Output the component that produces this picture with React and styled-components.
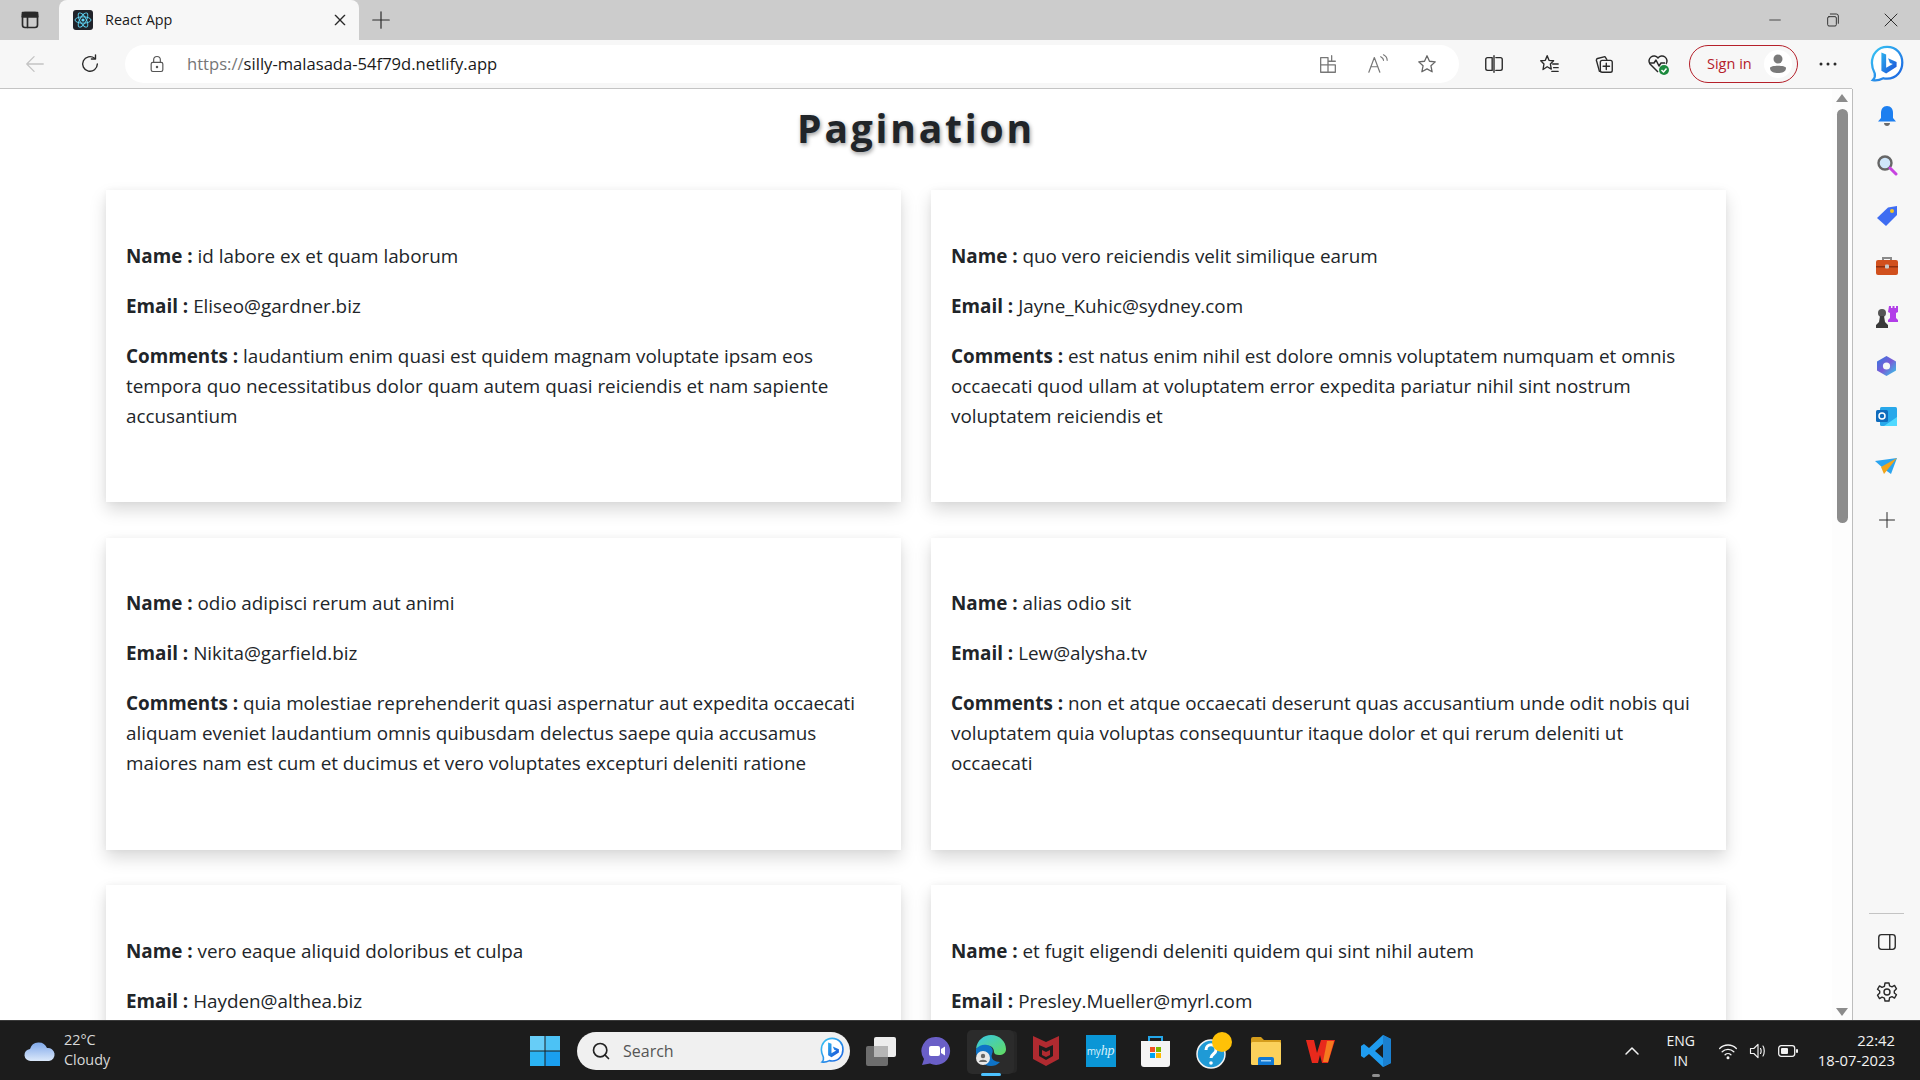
import React from 'react';
import styled, { createGlobalStyle } from 'styled-components';
import { Search as SearchGlyph } from 'lucide-react';

const GlobalStyle = createGlobalStyle`
  html, body {
    margin: 0;
    height: 100%;
    overflow: hidden;
    background: #fff;
    font-family: "Open Sans", "Liberation Sans", sans-serif;
  }
  * { box-sizing: border-box; }
`;

const Screen = styled.div`
  width: 1920px;
  height: 1080px;
  display: flex;
  flex-direction: column;
  overflow: hidden;
`;

/* browser chrome */
const TabStrip = styled.div`
  height: 40px;
  flex: none;
  background: #cccccc;
  display: flex;
  align-items: stretch;
`;

const TabToggle = styled.div`
  width: 59px;
  display: flex;
  align-items: center;
  justify-content: center;
`;

const Tab = styled.div`
  width: 300px;
  background: #f7f7f7;
  border-radius: 8px 8px 0 0;
  display: flex;
  align-items: center;
  padding: 0 11px 0 14px;
  gap: 12px;
`;

const TabTitle = styled.span`
  flex: 1;
  padding-bottom: 2px;
  font-size: 14.4px;
  color: #1a1a1a;
`;

const NewTab = styled.div`
  width: 44px;
  display: flex;
  align-items: center;
  justify-content: center;
`;

const WindowControls = styled.div`
  margin-left: auto;
  display: flex;
  align-items: center;
`;

const WindowButton = styled.div`
  width: 58px;
  display: flex;
  justify-content: center;
`;

const Toolbar = styled.div`
  height: 49px;
  flex: none;
  background: #f7f7f7;
  display: flex;
  align-items: center;
  padding-bottom: 1px;
  position: relative;
`;

const ToolbarRule = styled.div`
  height: 1px;
  background: #c4c4c4;
  position: absolute;
  left: 0;
  right: 68px;
  bottom: 0;
`;

const ToolSlot = styled.div`
  width: ${p => p.$w || 55}px;
  flex: none;
  display: flex;
  align-items: center;
  justify-content: center;
`;

const AddressBar = styled.div`
  width: 1334px;
  height: 38px;
  flex: none;
  border-radius: 19px;
  background: #fff;
  display: flex;
  align-items: center;
  padding: 0 8px 0 22px;
`;

const Url = styled.div`
  flex: 1;
  margin-left: 20px;
  padding-bottom: 2px;
  font-size: 16.6px;
  color: #1a1a1a;
  span { color: #767676; }
`;

const SignIn = styled.div`
  width: 109px;
  height: 38px;
  flex: none;
  border: 1.5px solid #b5202a;
  border-radius: 19px;
  display: flex;
  align-items: center;
  justify-content: space-between;
  padding: 0 5px 0 17px;
  font-size: 14.5px;
  color: #b5202a;
`;

const SignInLabel = styled.span`
  padding-bottom: 2px;
`;

const Avatar = styled.div`
  width: 28px;
  height: 28px;
  border-radius: 50%;
  background: #fff;
  display: flex;
  align-items: center;
  justify-content: center;
`;

/* page + side rails */
const Body = styled.div`
  flex: 1;
  min-height: 0;
  display: flex;
`;

const Page = styled.main`
  width: 1832px;
  flex: none;
  overflow: hidden;
  background: #fff;
  color: #212529;
`;

const Title = styled.h1`
  margin: 0;
  height: 101px;
  padding-top: 11px;
  text-align: center;
  font-size: 39px;
  line-height: 56px;
  font-weight: 700;
  letter-spacing: 2.8px;
  color: #212529;
  text-shadow: 1px 2px 4px rgba(0, 0, 0, 0.4);
`;

const Grid = styled.div`
  margin: 0 106px;
  display: grid;
  grid-template-columns: repeat(2, 795px);
  column-gap: 30px;
  row-gap: 35.5px;
`;

const Card = styled.article`
  height: 312px;
  padding: 30.5px 20px 0;
  background: #fff;
  box-shadow: 0 8px 16px rgba(0, 0, 0, 0.15), 0 0 6px rgba(0, 0, 0, 0.04);
`;

const Field = styled.p`
  margin: 20px 0;
  font-size: 18.85px;
  line-height: 30px;
  b { font-weight: 700; }
`;

const Scrollbar = styled.div`
  width: 20px;
  flex: none;
  background: #fdfdfd;
  display: flex;
  flex-direction: column;
  align-items: center;
  padding-top: 5px;
`;

const Thumb = styled.div`
  width: 11px;
  height: 414px;
  margin-top: 7px;
  border-radius: 6px;
  background: #8c8c8c;
`;

const Arrow = styled.div`
  width: 0;
  height: 0;
  border-left: 6px solid transparent;
  border-right: 6px solid transparent;
  ${p => (p.$down
    ? 'border-top: 8px solid #8c8c8c; margin-top: auto; margin-bottom: 4px;'
    : 'border-bottom: 8px solid #8c8c8c;')}
`;

const SideBar = styled.aside`
  flex: 1;
  background: #f7f7f7;
  border-left: 1px solid #bdbdbd;
  display: flex;
  flex-direction: column;
  align-items: center;
  padding: 2px 0 3px;
`;

const SideSlot = styled.div`
  height: 50px;
  flex: none;
  display: flex;
  align-items: center;
  justify-content: center;
  margin-top: ${p => p.$gap || 0}px;
`;

const SideRule = styled.div`
  width: 35px;
  height: 1px;
  margin-top: auto;
  margin-bottom: 3px;
  background: #c4c4c4;
`;

/* windows taskbar */
const Taskbar = styled.footer`
  height: 60px;
  flex: none;
  background: #1c1c1c;
  border-top: 1px solid #3a3a3a;
  display: flex;
  align-items: center;
  color: #f2f2f2;
  position: relative;
`;

const Weather = styled.div`
  width: 530px;
  flex: none;
  display: flex;
  align-items: center;
  gap: 8px;
  padding-left: 24px;
`;

const TwoLines = styled.div`
  padding-bottom: 2px;
  font-size: 14.4px;
  line-height: 20px;
  text-align: ${p => p.$align || 'left'};
  span { display: block; color: ${p => p.$muted || '#f2f2f2'}; }
`;

const StartButton = styled.div`
  width: 47px;
  flex: none;
  display: flex;
`;

const SearchBox = styled.div`
  width: 273px;
  height: 38px;
  flex: none;
  background: #f0f0f0;
  border-radius: 19px;
  display: flex;
  align-items: center;
  padding: 0 6px 0 14px;
  gap: 12px;
  font-size: 16px;
  color: #555;
`;

const SearchLabel = styled.span`
  flex: 1;
`;

const AppTray = styled.div`
  margin-left: 3px;
  display: flex;
  align-items: center;
`;

const AppSlot = styled.div`
  width: 55px;
  height: 52px;
  flex: none;
  display: flex;
  align-items: center;
  justify-content: center;
  position: relative;
`;

const AppIcon = styled.div`
  position: relative;
  display: flex;
`;

const ActiveBox = styled.div`
  position: absolute;
  inset: 5px 4px 3px 4px;
  background: #2b2b2b;
  border-radius: 5px;
  box-shadow: 4px 0 0 -1px #262626;
`;

const Indicator = styled.div`
  position: absolute;
  left: 50%;
  bottom: ${p => (p.$small ? 0 : 1)}px;
  width: ${p => (p.$small ? 8 : 20)}px;
  height: 3px;
  margin-left: ${p => (p.$small ? -4 : -10)}px;
  border-radius: 2px;
  background: ${p => (p.$small ? '#8e8e8e' : '#4cc2ff')};
`;

const HpTile = styled.div`
  width: 30px;
  height: 32px;
  background: #0a96d6;
  color: #d8f1fb;
  display: flex;
  align-items: center;
  justify-content: center;
  font-size: 10px;
  letter-spacing: -0.2px;
  em { font-size: 14px; font-family: "Liberation Serif", serif; }
`;

const SystemTray = styled.div`
  margin-left: auto;
  padding-right: 25px;
  display: flex;
  align-items: center;
`;

const Chevron = styled.div`
  margin-right: 20px;
  display: flex;
`;

const Lang = styled(TwoLines)`
  width: 40px;
  margin-right: 17px;
  padding-bottom: 0;
  font-size: 14px;
  text-align: center;
`;

const TrayIcons = styled.div`
  display: flex;
  align-items: center;
  gap: 10px;
  margin-right: 20px;
`;

const Clock = styled(TwoLines)`
  font-size: 14.8px;
  text-align: right;
`;

const Glyph = ({ size = 22, children, view = 24, color = '#2a2a2a', sw = 1.5 }) => (
  <svg width={size} height={size} viewBox={`0 0 ${view} ${view}`} fill="none" stroke={color} strokeWidth={sw} strokeLinecap="round" strokeLinejoin="round">
    {children}
  </svg>
);

const BingLogo = ({ size = 38 }) => (
  <svg width={size * 0.9} height={size} viewBox="0 0 36 40">
    <defs>
      <linearGradient id="bingRing" x1="0" y1="0" x2="1" y2="1">
        <stop offset="0" stopColor="#38c7f4" />
        <stop offset="1" stopColor="#1b5fe0" />
      </linearGradient>
      <linearGradient id="bingB" x1="0" y1="0" x2="1" y2="1">
        <stop offset="0" stopColor="#2bb0ee" />
        <stop offset="1" stopColor="#1d4fd8" />
      </linearGradient>
    </defs>
    <path d="M18 2C8 2 2 10 2 19c0 5 2 9 3 11 .5 2 0 5-2 7 5 1 9-1 11-2 1.500.5 3 .5 4 .5 10 0 16-8 16-17S28 2 18 2z" fill="#fff" stroke="url(#bingRing)" strokeWidth="2.4" />
    <path d="M12 8l5 2v14l7-4-3-1-2-5 9 4v5l-11 7-5-3z" fill="url(#bingB)" />
  </svg>
);

const ReactFavicon = () => (
  <svg width="20" height="20" viewBox="0 0 20 20">
    <rect width="20" height="20" rx="3" fill="#20232a" />
    <g fill="none" stroke="#61dafb" strokeWidth="0.9">
      <ellipse cx="10" cy="10" rx="8" ry="3.2" />
      <ellipse cx="10" cy="10" rx="8" ry="3.2" transform="rotate(60 10 10)" />
      <ellipse cx="10" cy="10" rx="8" ry="3.2" transform="rotate(120 10 10)" />
    </g>
    <circle cx="10" cy="10" r="1.6" fill="#61dafb" />
  </svg>
);

const sideIcons = [
  <svg key="bell" width="20" height="22" viewBox="0 0 20 22">
    <path d="M10 1c-4 0-6 3-6 7v5l-3 3.500h18L16 13V8c0-4-2-7-6-7z" fill="#1d7ff0" />
    <path d="M7 18h6c0 2-1.500 3-3 3s-3-1-3-3z" fill="#6b6b6b" />
  </svg>,
  <svg key="search" width="22" height="22" viewBox="0 1 22 22">
    <circle cx="9" cy="9" r="6.500" fill="#cfe6fa" stroke="#666" strokeWidth="2.4" />
    <path d="M14 14l6 6" stroke="#c743e0" strokeWidth="3" strokeLinecap="round" />
  </svg>,
  <svg key="tag" width="22" height="22" viewBox="0 0 22 22">
    <path d="M1 13L12 2.500 21 1v9L10 21z" fill="#3f6df2" />
    <circle cx="16" cy="6" r="2" fill="#f6c51f" />
  </svg>,
  <svg key="tool" width="24" height="20" viewBox="0 0 24 20">
    <path d="M8 5V2h8v3" fill="none" stroke="#8a8a8a" strokeWidth="2" />
    <rect x="1" y="4" width="22" height="15" rx="2" fill="#d1501d" />
    <rect x="1" y="10" width="22" height="1.500" fill="#8f3010" />
    <rect x="10" y="8.500" width="4" height="4" rx="1" fill="#c8c8c8" />
  </svg>,
  <svg key="chess" width="24" height="23" viewBox="0 0 24 23">
    <path d="M14 1h2v2h1.500V1h2v2H21V1h2v6l-2 1v5l2 2v2H13v-2l2-2V8l-2-1z" fill="#b23ee8" />
    <circle cx="7" cy="8" r="4" fill="#555" />
    <path d="M5 11h4l1 6 3 3v3H1v-3l3-3z" fill="#3a3a3a" />
  </svg>,
  <svg key="m365" width="21" height="22" viewBox="0 0 21 22">
    <defs>
      <linearGradient id="m365g" x1="0" y1="0" x2="1" y2="1">
        <stop offset="0" stopColor="#2f7be0" />
        <stop offset="0.5" stopColor="#7b5bd6" />
        <stop offset="1" stopColor="#2fd0ea" />
      </linearGradient>
    </defs>
    <path d="M10.500 1L20 6.500v9L10.500 21 1 15.500v-9z" fill="url(#m365g)" />
    <circle cx="10.500" cy="11" r="3.600" fill="#f7f7f7" />
  </svg>,
  <svg key="outlook" width="22" height="21" viewBox="0 0 22 21">
    <rect x="4" y="1" width="17" height="19" rx="1.500" fill="#28a8ea" />
    <path d="M8 20l13-9v8a1 1 0 01-1 1z" fill="#50d9ff" />
    <rect x="0" y="4" width="12" height="12" rx="1.500" fill="#0f6cbd" />
    <circle cx="6" cy="10" r="3" fill="none" stroke="#fff" strokeWidth="1.500" />
  </svg>,
  <svg key="send" width="23" height="17" viewBox="0 0 23 17">
    <path d="M0 3l22-3-6 16-7-5z" fill="#2aa4ef" />
    <path d="M22 0L6 9l3 7z" fill="#f2a51a" />
  </svg>,
];

const taskApps = [
  <svg key="view" width="30" height="30" viewBox="0 0 30 30">
    <rect x="0" y="10" width="22" height="20" rx="2" fill="#6d6d6d" />
    <rect x="8" y="1" width="22" height="20" rx="2" fill="#ededed" />
    <rect x="8" y="10" width="14" height="11" fill="#b5b5b5" />
  </svg>,
  <svg key="meet" width="30" height="30" viewBox="0 0 30 30">
    <path d="M15 1a14 14 0 11-6 26.600L1 29l2-6A14 14 0 0115 1z" fill="#6a5fc7" />
    <rect x="8" y="10" width="11" height="10" rx="2" fill="#fff" />
    <path d="M20 13l4-2.500v9L20 17z" fill="#fff" />
  </svg>,
  <svg key="edge" width="32" height="34" viewBox="0 0 32 34">
    <defs>
      <linearGradient id="edgeA" x1="0" y1="0" x2="1" y2="1">
        <stop offset="0" stopColor="#36c6e8" />
        <stop offset="1" stopColor="#63dc5f" />
      </linearGradient>
    </defs>
    <path d="M1 15C2 6 9 1 16 1c9 0 15 7 15 14 0 4-3 6-7 6-3 0-5-1-5-3 0-4-3-7-8-6-5 0-9 2-10 3z" fill="url(#edgeA)" />
    <path d="M1 15c3-4 8-5 11-4 5 1 7 5 5 9-2 5 3 8 8 8-3 3-6 4-9 4C8 32 0 25 1 15z" fill="#0e73c7" />
    <circle cx="8" cy="24" r="7" fill="#e8e8e8" />
    <circle cx="8" cy="22" r="2.200" fill="#666" />
    <path d="M4 28c0-3 8-3 8 0z" fill="#666" />
  </svg>,
  <svg key="mcafee" width="28" height="32" viewBox="0 0 28 32">
    <path d="M1 1l13 6 13-6v23l-13 7-13-7z" fill="#b02a30" />
    <path d="M7 10l7 3 7-3v11l-7 4-7-4z" fill="#1c1c1c" />
    <path d="M10 15l4 2 4-2v5l-4 2-4-2z" fill="#b02a30" />
  </svg>,
  <HpTile key="hp">my<em>hp</em></HpTile>,
  <svg key="store" width="29" height="32" viewBox="0 0 29 32">
    <path d="M8 7V2h13v5" fill="none" stroke="#23a6e8" strokeWidth="2" />
    <path d="M0 6h29v23a3 3 0 01-3 3H3a3 3 0 01-3-3z" fill="#f4f4f4" />
    <rect x="9" y="12" width="5" height="5" fill="#f25022" />
    <rect x="15" y="12" width="5" height="5" fill="#7fba00" />
    <rect x="9" y="18" width="5" height="5" fill="#00a4ef" />
    <rect x="15" y="18" width="5" height="5" fill="#ffb900" />
  </svg>,
  <svg key="help" width="44" height="38" viewBox="-7 0 44 38">
    <circle cx="15" cy="22" r="14" fill="#1f9ad6" stroke="#f2f2f2" strokeWidth="1.500" />
    <path d="M10 18c0-7 10-7 10 0 0 4-5 4-5 8" fill="none" stroke="#fff" strokeWidth="3" />
    <circle cx="15" cy="31" r="1.800" fill="#fff" />
    <circle cx="26" cy="10" r="10" fill="#ffc107" />
  </svg>,
  <svg key="files" width="30" height="28" viewBox="0 0 30 28">
    <path d="M0 2a2 2 0 012-2h8l3 3h17v6H0z" fill="#d59d1c" />
    <rect y="5" width="30" height="23" rx="1.500" fill="#fbd15b" />
    <path d="M7 28v-6a2 2 0 012-2h12a2 2 0 012 2v6z" fill="#0f78d4" />
    <rect x="10" y="23" width="10" height="1.500" fill="#9ed0f5" />
  </svg>,
  <svg key="wps" width="31" height="26" viewBox="0 0 31 26">
    <path d="M1 2h8l3 13L16 2h8l6 0-7 23h-6l-2-8-2 8H7z" fill="#e8291c" />
    <path d="M22 3l7 0-6 21h-5z" fill="#f57a1f" />
  </svg>,
  <svg key="code" width="30" height="32" viewBox="0 0 30 32">
    <path d="M22 0l8 4v24l-8 4-14-13-5 4-3-2V11l3-2 5 4zM22 9l-8 7 8 7z" fill="#1f9cf0" />
    <path d="M22 0l8 4v24l-8 4z" fill="#1b80d0" />
  </svg>,
];

const comments = [
  {
    name: 'id labore ex et quam laborum',
    email: 'Eliseo@gardner.biz',
    body: 'laudantium enim quasi est quidem magnam voluptate ipsam eos tempora quo necessitatibus dolor quam autem quasi reiciendis et nam sapiente accusantium',
  },
  {
    name: 'quo vero reiciendis velit similique earum',
    email: 'Jayne_Kuhic@sydney.com',
    body: 'est natus enim nihil est dolore omnis voluptatem numquam et omnis occaecati quod ullam at voluptatem error expedita pariatur nihil sint nostrum voluptatem reiciendis et',
  },
  {
    name: 'odio adipisci rerum aut animi',
    email: 'Nikita@garfield.biz',
    body: 'quia molestiae reprehenderit quasi aspernatur aut expedita occaecati aliquam eveniet laudantium omnis quibusdam delectus saepe quia accusamus maiores nam est cum et ducimus et vero voluptates excepturi deleniti ratione',
  },
  {
    name: 'alias odio sit',
    email: 'Lew@alysha.tv',
    body: 'non et atque occaecati deserunt quas accusantium unde odit nobis qui voluptatem quia voluptas consequuntur itaque dolor et qui rerum deleniti ut occaecati',
  },
  {
    name: 'vero eaque aliquid doloribus et culpa',
    email: 'Hayden@althea.biz',
    body: 'harum non quasi et ratione tempore iure ex voluptates in ratione harum architecto fugit inventore cupiditate voluptates magni quo et',
  },
  {
    name: 'et fugit eligendi deleniti quidem qui sint nihil autem',
    email: 'Presley.Mueller@myrl.com',
    body: 'doloribus at sed quis culpa deserunt consectetur qui praesentium accusamus fugiat dicta voluptatem rerum ut voluptate autem',
  },
];

const App = () => (
  <Screen>
    <GlobalStyle />
    <TabStrip>
      <TabToggle>
        <Glyph size={20} sw={2}>
          <rect x="3" y="3" width="18" height="18" rx="3" />
          <path d="M3 8h18M9 8v13" />
          <path d="M3 3h18v5H3z" fill="#2a2a2a" />
        </Glyph>
      </TabToggle>
      <Tab>
        <ReactFavicon />
        <TabTitle>React App</TabTitle>
        <Glyph size={16} sw={2}><path d="M5 5l14 14M19 5L5 19" /></Glyph>
      </Tab>
      <NewTab>
        <Glyph size={22} sw={1.3}><path d="M12 3v18M3 12h18" /></Glyph>
      </NewTab>
      <WindowControls>
        <WindowButton><Glyph size={16} sw={1.2}><path d="M4 12h16" /></Glyph></WindowButton>
        <WindowButton>
          <Glyph size={16} sw={1.4}>
            <rect x="4" y="7" width="13" height="14" rx="2" />
            <path d="M8 3h9a3 3 0 013 3v11" />
          </Glyph>
        </WindowButton>
        <WindowButton><Glyph size={18} sw={1.3}><path d="M4 4l16 16M20 4L4 20" /></Glyph></WindowButton>
      </WindowControls>
    </TabStrip>

    <Toolbar>
      <ToolSlot $w={70}>
        <Glyph color="#c4c4c4" sw={1.4}><path d="M21 12H3M11 4l-8 8 8 8" /></Glyph>
      </ToolSlot>
      <ToolSlot $w={40}>
        <Glyph sw={1.5}>
          <path d="M20 12a8 8 0 11-3-6.300" />
          <path d="M18 2v4.500h-4.500" />
        </Glyph>
      </ToolSlot>
      <ToolSlot $w={15} />
      <AddressBar>
        <Glyph size={20} color="#555" sw={1.4}>
          <rect x="5" y="10" width="14" height="11" rx="2" />
          <path d="M8 10V7a4 4 0 018 0v3" />
          <circle cx="12" cy="15.500" r="0.800" fill="#555" />
        </Glyph>
        <Url><span>https://</span>silly-malasada-54f79d.netlify.app</Url>
        <ToolSlot $w={50}>
          <Glyph color="#777" sw={1.4}>
            <path d="M4 5h8v16H4zM4 13h16v8h-8M12 9h8M16 3v6" />
          </Glyph>
        </ToolSlot>
        <ToolSlot $w={50}>
          <Glyph color="#777" sw={1.3}>
            <path d="M2 21l6-16 6 16M4 15h8M15 4c2 1 3 2 3 4M18 2c2 1 4 3 4 6" />
          </Glyph>
        </ToolSlot>
        <ToolSlot $w={48}>
          <Glyph color="#666" sw={1.4}>
            <path d="M12 3l2.700 6 6.300.700-4.700 4.300 1.300 6.500L12 17.300 6.400 20.500l1.300-6.500L3 9.700 9.300 9z" />
          </Glyph>
        </ToolSlot>
      </AddressBar>
      <ToolSlot $w={70}>
        <Glyph>
          <path d="M10 5H5a2 2 0 00-2 2v10a2 2 0 002 2h5zM14 5h5a2 2 0 012 2v10a2 2 0 01-2 2h-5M12 3v18" />
        </Glyph>
      </ToolSlot>
      <ToolSlot $w={40}>
        <Glyph>
          <path d="M10 3l2 5 5 .500-3.500 3.500 1 5.500L10 15l-4.500 3 1-6L3 8.500 8 8zM16 12h6M17 16h5M15 20h7" />
        </Glyph>
      </ToolSlot>
      <ToolSlot $w={70}>
        <Glyph>
          <path d="M7 20l-3-11a2 2 0 011-3l8-2 2 3" />
          <rect x="8" y="8" width="13" height="13" rx="2" />
          <path d="M14.500 11v7M11 14.500h7" />
        </Glyph>
      </ToolSlot>
      <ToolSlot $w={38}>
        <svg width="24" height="24" viewBox="0 0 24 24" fill="none" stroke="#2a2a2a" strokeWidth="1.500" strokeLinejoin="round">
          <path d="M12 20L4 12a5 5 0 018-6 5 5 0 018 6" />
          <path d="M3 11h5l2-3 3 6 2-3h4" />
          <circle cx="18" cy="18" r="5" fill="#1c8a3e" stroke="none" />
          <path d="M15.500 18l2 2 3-3.500" stroke="#fff" />
        </svg>
      </ToolSlot>
      <ToolSlot $w={12} />
      <SignIn>
        <SignInLabel>Sign in</SignInLabel>
        <Avatar>
          <svg width="18" height="20" viewBox="0 0 18 20">
            <circle cx="9" cy="5" r="4.500" fill="#7a7a7a" />
            <path d="M1 14c0-3 16-3 16 0 0 4-4 5-8 5s-8-1-8-5z" fill="#7a7a7a" />
          </svg>
        </Avatar>
      </SignIn>
      <ToolSlot $w={60}>
        <svg width="18" height="4" viewBox="0 0 18 4" fill="#2a2a2a">
          <circle cx="2" cy="2" r="1.500" /><circle cx="9" cy="2" r="1.500" /><circle cx="16" cy="2" r="1.500" />
        </svg>
      </ToolSlot>
      <ToolSlot $w={58}>
        <BingLogo />
      </ToolSlot>
      <ToolbarRule />
    </Toolbar>

    <Body>
      <Page>
        <Title>Pagination</Title>
        <Grid>
          {comments.map(item => (
            <Card key={item.email}>
              <Field><b>Name :</b> {item.name}</Field>
              <Field><b>Email :</b> {item.email}</Field>
              <Field><b>Comments :</b> {item.body}</Field>
            </Card>
          ))}
        </Grid>
      </Page>
      <Scrollbar>
        <Arrow />
        <Thumb />
        <Arrow $down />
      </Scrollbar>
      <SideBar>
        {sideIcons.map(icon => <SideSlot key={icon.key}>{icon}</SideSlot>)}
        <SideSlot $gap={4}><Glyph size={20} sw={1.2}><path d="M12 3v18M3 12h18" /></Glyph></SideSlot>
        <SideRule />
        <SideSlot>
          <Glyph size={22} sw={1.5}>
            <rect x="3" y="4" width="18" height="16" rx="3" />
            <path d="M15 4v16" />
          </Glyph>
        </SideSlot>
        <SideSlot>
          <Glyph size={24} sw={1.4}>
            <circle cx="12" cy="12" r="3" />
            <path d="M10 3h4l.6 2.800 2.400 1 2.500-1.400 2 3.400L19.300 11v2l2.200 1.700-2 3.400-2.500-1.400-2.400 1L14 21h-4l-.6-2.800-2.400-1-2.500 1.400-2-3.400L4.700 13v-2L2.500 9.300l2-3.400L7 7.300l2.400-1z" />
          </Glyph>
        </SideSlot>
      </SideBar>
    </Body>

    <Taskbar>
      <Weather>
        <svg width="32" height="22" viewBox="0 0 32 22">
          <defs>
            <linearGradient id="cloudFill" x1="0" y1="0" x2="0" y2="1">
              <stop offset="0" stopColor="#7fa8ea" />
              <stop offset="1" stopColor="#dbe8fa" />
            </linearGradient>
          </defs>
          <path d="M7 21a6 6 0 01-1-12 9 9 0 0117-1 6.500 6.500 0 012 13z" fill="url(#cloudFill)" />
        </svg>
        <TwoLines $muted="#d8d8d8">
          <span>22°C</span>
          <span>Cloudy</span>
        </TwoLines>
      </Weather>
      <StartButton>
        <svg width="30" height="30" viewBox="0 0 30 30" fill="#2bb3f3">
          <rect width="14.500" height="14.500" fill="#67cdf7" />
          <rect x="15.500" width="14.500" height="14.500" fill="#4cc2f5" />
          <rect y="15.500" width="14.500" height="14.500" fill="#2bb3f3" />
          <rect x="15.500" y="15.500" width="14.500" height="14.500" fill="#1a9ff0" />
        </svg>
      </StartButton>
      <SearchBox>
        <SearchGlyph size={20} color="#222" strokeWidth={2} />
        <SearchLabel>Search</SearchLabel>
        <BingLogo size={27} />
      </SearchBox>
      <AppTray>
        {taskApps.map((icon, index) => (
          <AppSlot key={icon.key}>
            {index === 2 && <ActiveBox />}
            <AppIcon>{icon}</AppIcon>
            {index === 2 && <Indicator />}
            {index === 9 && <Indicator $small />}
          </AppSlot>
        ))}
      </AppTray>
      <SystemTray>
        <Chevron>
          <Glyph size={18} color="#f2f2f2" sw={2}><path d="M4 16l8-8 8 8" /></Glyph>
        </Chevron>
        <Lang>
          <span>ENG</span>
          <span>IN</span>
        </Lang>
        <TrayIcons>
          <Glyph size={20} color="#f2f2f2" sw={1.6}>
            <path d="M2 9a14 14 0 0120 0M5 13a10 10 0 0114 0M8.500 16.500a5 5 0 017 0" />
            <circle cx="12" cy="20" r="1" fill="#f2f2f2" />
          </Glyph>
          <Glyph size={20} color="#f2f2f2" sw={1.4}>
            <path d="M3 9v6h4l5 5V4L7 9zM15 9c1 1 1 5 0 6M18 6c2 3 2 9 0 12" />
          </Glyph>
          <svg width="20" height="12" viewBox="0 0 20 12">
            <rect x="0.700" y="0.700" width="16" height="10.600" rx="2.500" fill="none" stroke="#f2f2f2" strokeWidth="1.300" />
            <rect x="3" y="3" width="7" height="6" rx="1" fill="#f2f2f2" />
            <rect x="18" y="4" width="2" height="4" rx="1" fill="#f2f2f2" />
          </svg>
        </TrayIcons>
        <Clock>
          <span>22:42</span>
          <span>18-07-2023</span>
        </Clock>
      </SystemTray>
    </Taskbar>
  </Screen>
);

export default App;
